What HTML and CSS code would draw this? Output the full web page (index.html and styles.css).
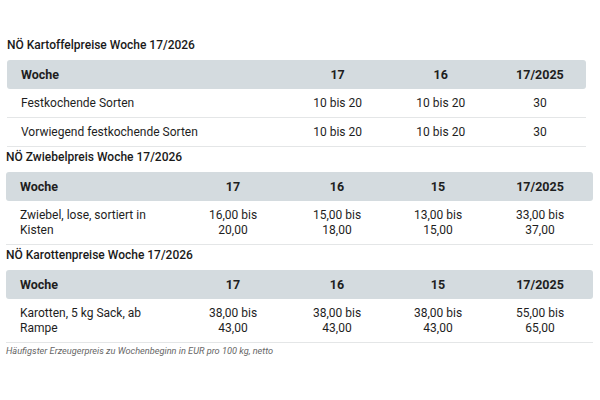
FILE: index.html
```html
<!DOCTYPE html>
<html lang="de">
<head>
<meta charset="utf-8">
<link rel="stylesheet" href="styles.css">
</head>
<body>
<div class="page">
  <section class="block block-narrow">
    <h2 class="title">NÖ Kartoffelpreise Woche 17/2026</h2>
    <table class="prices">
      <colgroup><col class="c-label1"><col class="c-a"><col class="c-b"><col class="c-c"></colgroup>
      <thead><tr><th class="lbl">Woche</th><th>17</th><th>16</th><th>17/2025</th></tr></thead>
      <tbody>
        <tr><td class="lbl">Festkochende Sorten</td><td>10 bis 20</td><td>10 bis 20</td><td>30</td></tr>
        <tr><td class="lbl">Vorwiegend festkochende Sorten</td><td>10 bis 20</td><td>10 bis 20</td><td>30</td></tr>
      </tbody>
    </table>
  </section>
  <section class="block">
    <h2 class="title">NÖ Zwiebelpreis Woche 17/2026</h2>
    <table class="prices">
      <colgroup><col class="c-label"><col class="c-w1"><col class="c-w2"><col class="c-w3"><col class="c-w4"></colgroup>
      <thead><tr><th class="lbl">Woche</th><th>17</th><th>16</th><th>15</th><th>17/2025</th></tr></thead>
      <tbody>
        <tr class="tall"><td class="lbl">Zwiebel, lose, sortiert in Kisten</td><td>16,00 bis<br>20,00</td><td>15,00 bis<br>18,00</td><td>13,00 bis<br>15,00</td><td>33,00 bis<br>37,00</td></tr>
      </tbody>
    </table>
  </section>
  <section class="block">
    <h2 class="title">NÖ Karottenpreise Woche 17/2026</h2>
    <table class="prices">
      <colgroup><col class="c-label"><col class="c-w1"><col class="c-w2"><col class="c-w3"><col class="c-w4"></colgroup>
      <thead><tr><th class="lbl">Woche</th><th>17</th><th>16</th><th>15</th><th>17/2025</th></tr></thead>
      <tbody>
        <tr class="tall"><td class="lbl">Karotten, 5 kg Sack, ab Rampe</td><td>38,00 bis<br>43,00</td><td>38,00 bis<br>43,00</td><td>38,00 bis<br>43,00</td><td>55,00 bis<br>65,00</td></tr>
      </tbody>
    </table>
    <p class="note">Häufigster Erzeugerpreis zu Wochenbeginn in EUR pro 100 kg, netto</p>
  </section>
</div>
</body>
</html>
```
FILE: styles.css
```css
html, body {
  margin: 0;
  padding: 0;
  background: #ffffff;
}
body {
  font-family: Roboto, "Liberation Sans", Arial, sans-serif;
  color: #1e1e1e;
  font-size: 12px;
}
.page {
  padding: 35px 7px 0 6px;
  width: 587px;
}
.block-narrow {
  width: 579px;
  margin-left: 1px;
}
.title {
  margin: 0 0 5px 0;
  height: 20px;
  line-height: 20px;
  font-size: 12px;
  font-weight: 500;
  color: #1a1a1a;
}
.prices {
  width: 100%;
  border-collapse: collapse;
  table-layout: fixed;
}
.prices th {
  background: #d4dbdf;
  font-weight: 700;
  height: 29px;
  padding: 0;
  text-align: center;
  font-size: 12.5px;
}
.prices th:first-child { border-radius: 3px 0 0 3px; }
.prices th:last-child { border-radius: 0 3px 3px 0; }
.prices td {
  text-align: center;
  height: 28px;
  padding: 0;
  border-bottom: 1px solid #e4e6e7;
  line-height: 15px;
  font-size: 12px;
}
.prices .lbl {
  text-align: left;
  padding-left: 14px;
}
.prices tr.tall td {
  height: 42px;
  padding-top: 1px;
}
.prices tr.tall td.lbl { padding-right: 20px; }
.c-label1 { width: 280px; }
.c-a { width: 100px; }
.c-b { width: 106px; }
.c-c { width: 92px; }
.c-label { width: 175px; }
.c-w1 { width: 104px; }
.c-w2 { width: 104px; }
.c-w3 { width: 98px; }
.c-w4 { width: 106px; }
.note {
  margin: 0;
  padding-top: 1px;
  font-size: 9.2px;
  font-style: italic;
  color: #666;
  line-height: 13px;
}
```
